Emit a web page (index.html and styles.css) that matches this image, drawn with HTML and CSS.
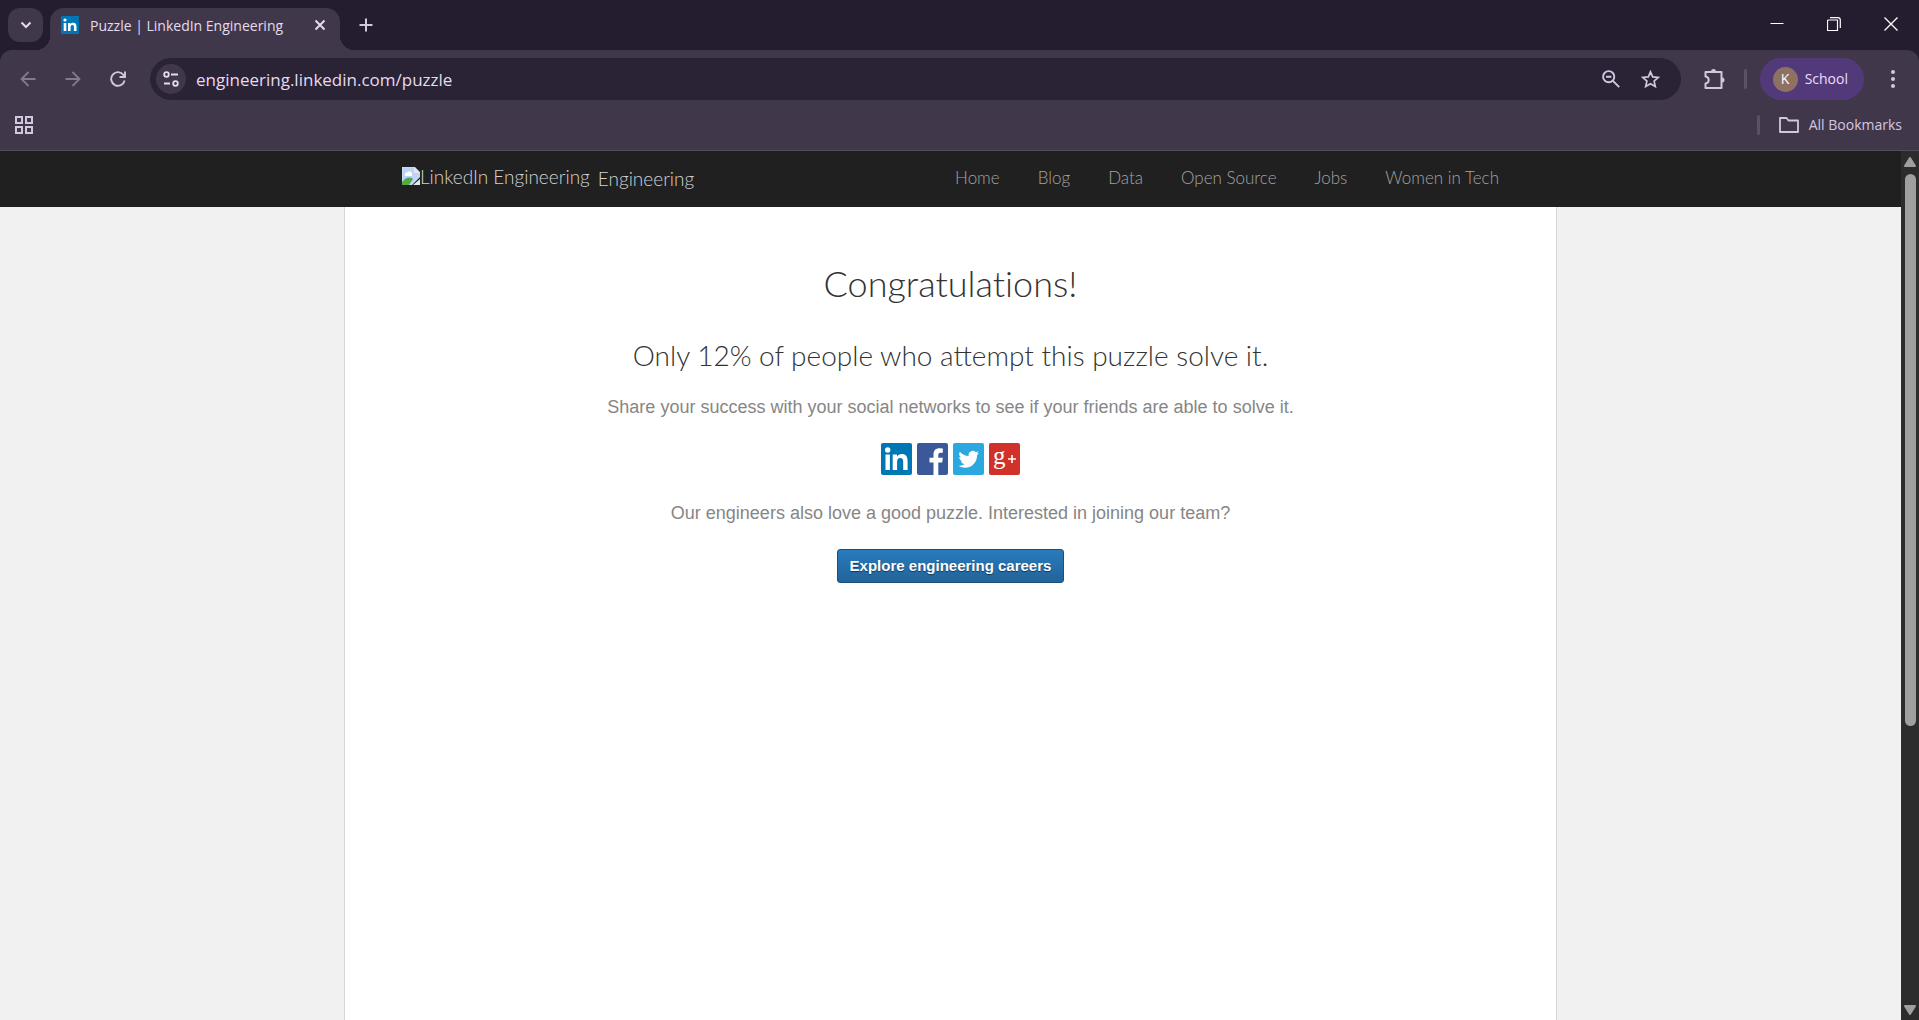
FILE: index.html
```html
<!DOCTYPE html>
<html lang="en">
<head>
<meta charset="utf-8">
<title>Puzzle | LinkedIn Engineering</title>
<link rel="stylesheet" href="styles.css">
</head>
<body>
<div class="browser">
  <div class="titlebar">
    <button class="tab-search" aria-label="Search tabs"><svg width="12" height="8" viewBox="0 0 12 8"><path d="M1.500 1.500 6 6l4.500-4.500" fill="none" stroke="currentColor" stroke-width="2"/></svg></button>
    <div class="tab">
      <svg width="18" height="18" viewBox="0 0 18 18"><rect width="18" height="18" rx="1" fill="#0077b5"/><circle cx="4" cy="4" r="1.600" fill="#fff"/><path d="M2.700 7h2.600v8H2.700zM7 7h2.500v1.200C10.200 7.200 11 6.800 12.200 6.800c2.400 0 3.300 1.500 3.300 3.900V15h-2.600v-4c0-1.200-.3-2-1.500-2s-1.800.8-1.800 2v4H7z" fill="#fff"/></svg>
      <span class="tab-title">Puzzle | LinkedIn Engineering</span>
      <button class="icon-button" aria-label="Close tab"><svg width="12" height="12" viewBox="0 0 12 12"><path d="m1.500 1.500 9 9m0-9-9 9" stroke="currentColor" stroke-width="2"/></svg></button>
    </div>
    <button class="icon-button new-tab" aria-label="New tab"><svg width="14" height="14" viewBox="0 0 14 14"><path d="M7 .5v13M.5 7h13" stroke="currentColor" stroke-width="2"/></svg></button>
    <div class="window-controls">
      <button class="icon-button" aria-label="Minimize"><svg width="14" height="14" viewBox="0 0 14 14"><path d="M.5 6.500h13" stroke="#fff"/></svg></button>
      <button class="icon-button" aria-label="Restore"><svg width="14" height="14" viewBox="0 0 14 14"><path d="M1.500 3h9v10.500h-10V3.500zM3 .7h8q2.300 0 2.300 2.300v8" fill="none" stroke="#fff" stroke-width="1.200"/></svg></button>
      <button class="icon-button" aria-label="Close"><svg width="14" height="14" viewBox="0 0 14 14"><path d="m.5.5 13 13m0-13-13 13" stroke="#fff" stroke-width="1.300"/></svg></button>
    </div>
  </div>
  <div class="toolbar">
    <button class="icon-button dim" aria-label="Back"><svg width="16" height="16" viewBox="0 0 16 16"><path d="M15.500 8H2M8.500 1 1.500 8l7 7" fill="none" stroke="currentColor" stroke-width="1.800"/></svg></button>
    <button class="icon-button dim" aria-label="Forward"><svg width="16" height="16" viewBox="0 0 16 16"><path d="M.5 8H14M7.500 1l7 7-7 7" fill="none" stroke="currentColor" stroke-width="1.800"/></svg></button>
    <button class="icon-button" aria-label="Reload"><svg width="16" height="16" viewBox="0 0 16 16"><path d="M14.600 9.500A6.800 6.800 0 1 1 13.500 4L14.700 6M15 .5V6H9.500" fill="none" stroke="currentColor" stroke-width="1.900"/></svg></button>
    <div class="address">
      <button class="site-info" aria-label="Site information"><svg width="16" height="16" viewBox="0 0 16 16"><g fill="none" stroke="currentColor" stroke-width="1.800"><circle cx="3.500" cy="3.500" r="2.300"/><path d="M8 3.500h7M1 12.500h6"/><circle cx="12.500" cy="12.500" r="2.300"/></g></svg></button>
      <input class="url" type="text" aria-label="Address" value="engineering.linkedin.com/puzzle">
      <button class="icon-button" aria-label="Zoom"><svg width="18" height="18" viewBox="0 0 18 18"><g fill="none" stroke="currentColor" stroke-width="1.900"><circle cx="6.700" cy="6.700" r="5.600"/><path d="m10.700 10.700 6.500 6.500M4 6.700h5.400"/></g></svg></button>
      <button class="icon-button" aria-label="Bookmark this tab"><svg width="19" height="18" viewBox="0 0 19 18"><path d="m9.500 1.800 2.200 5.100 5.600.5-4.200 3.700 1.200 5.400-4.800-2.800-4.800 2.800 1.200-5.400-4.200-3.700 5.600-.5z" fill="none" stroke="currentColor" stroke-width="1.700"/></svg></button>
    </div>
    <button class="icon-button extensions" aria-label="Extensions"><svg width="21" height="21" viewBox="0 0 21 21"><path d="M1.500 3h16v16h-16v-4.500q3.200-.5 3.200-3.500T1.500 7.500z" fill="none" stroke="currentColor" stroke-width="2" stroke-linejoin="round"/><path d="M7 2.500a2.500 2.500 0 0 1 5 0zM18 8.500a2.500 2.500 0 0 1 0 5z" fill="currentColor"/></svg></button>
    <span class="divider"></span>
    <button class="profile"><span class="avatar">K</span>School</button>
    <button class="icon-button menu" aria-label="Menu"><svg width="4" height="18" viewBox="0 0 4 18"><g fill="currentColor"><circle cx="2" cy="2" r="2"/><circle cx="2" cy="9" r="2"/><circle cx="2" cy="16" r="2"/></g></svg></button>
  </div>
  <div class="bookmarks">
    <button class="icon-button apps" aria-label="Apps"><svg width="18" height="18" viewBox="0 0 18 18"><path d="M1 1h6v6H1zM11 1h6v6h-6zM1 11h6v6H1zM11 11h6v6h-6z" fill="none" stroke="currentColor" stroke-width="2"/></svg></button>
    <span class="divider"></span>
    <button class="all-bookmarks"><svg width="20" height="16" viewBox="0 0 20 16"><path d="M1 1h6.500l2 2.500H19V15H1z" fill="none" stroke="currentColor" stroke-width="1.800" stroke-linejoin="round"/></svg>All Bookmarks</button>
  </div>
  <div class="viewport">
    <div class="site">
      <header class="site-header">
        <div class="header-inner">
          <a class="brand" href="#"><span class="brand-image"><svg width="18" height="18" viewBox="0 0 18 18"><path d="M0 0h13l5 5v5L10 18H0z" fill="#c8d9f3"/><path d="M1 1h11v5h5v3l-8 8H1z" fill="#bcd4fb"/><path d="M3 8q0-3 3-3 3-2 4 2v2H3z" fill="#fff"/><path d="M0 18v-3q6-7 11-3l-4 6z" fill="#55a846"/><path d="M12 0v6h6zM18 12v6h-7z" fill="#e3e6ea"/></svg>LinkedIn Engineering</span><span class="brand-name">Engineering</span></a>
          <nav class="nav">
            <a href="#">Home</a><a href="#">Blog</a><a href="#">Data</a><a href="#">Open Source</a><a href="#">Jobs</a><a href="#">Women in Tech</a>
          </nav>
        </div>
      </header>
      <main class="content">
        <h1>Congratulations!</h1>
        <h2>Only 12% of people who attempt this puzzle solve it.</h2>
        <p>Share your success with your social networks to see if your friends are able to solve it.</p>
        <div class="social">
          <a href="#" aria-label="LinkedIn"><svg viewBox="0 0 31 32"><rect width="31" height="32" rx="2" fill="#0077b5"/><circle cx="6.700" cy="7" r="2.700" fill="#fff"/><path d="M4.500 11.500h4.400V27H4.500zM11.700 11.500H16v2.200c1-1.700 2.600-2.600 4.600-2.600 4.300 0 6 2.500 6 7V27h-4.400v-8c0-2.500-.8-4-2.900-4-2.200 0-3.200 1.600-3.200 4v8h-4.400z" fill="#fff"/></svg></a>
          <a href="#" aria-label="Facebook"><svg viewBox="0 0 31 32"><rect width="31" height="32" rx="2" fill="#3b5998"/><path d="M16.500 32V19.500h-4v-4.700h4v-3.500c0-4 2.400-6 6-6q2 0 3.300.2v4.200h-2.300c-1.900 0-2.200 1-2.200 2.300v2.800h4.500l-.6 4.700h-3.900V32z" fill="#fff"/></svg></a>
          <a href="#" aria-label="Twitter"><svg viewBox="0 0 31 32"><rect width="31" height="32" rx="2" fill="#2ca8e0"/><path transform="translate(5.500 6) scale(.86)" d="M23.950 4.570a10 10 0 0 1-2.820.77 4.960 4.960 0 0 0 2.160-2.720c-.95.550-2 .950-3.130 1.180a4.920 4.920 0 0 0-8.380 4.480C7.690 8.100 4.070 6.130 1.640 3.160a4.920 4.920 0 0 0 1.520 6.570 4.900 4.900 0 0 1-2.230-.61v.06a4.920 4.920 0 0 0 3.950 4.830 5 5 0 0 1-2.210.08 4.940 4.940 0 0 0 4.600 3.420A9.870 9.870 0 0 1 0 19.540a14 14 0 0 0 7.550 2.210c9.050 0 14-7.500 14-13.980 0-.21 0-.42-.02-.63a9.940 9.940 0 0 0 2.420-2.570z" fill="#fff"/></svg></a>
          <a href="#" aria-label="Google Plus"><svg viewBox="0 0 31 32"><rect width="31" height="32" rx="2" fill="#d13128"/><text class="gplus" x="4" y="21">g</text><path d="M19 16h8m-4-4v8" stroke="#fff" stroke-width="1.600"/></svg></a>
        </div>
        <p>Our engineers also love a good puzzle. Interested in joining our team?</p>
        <button class="cta">Explore engineering careers</button>
      </main>
    </div>
    <div class="scrollbar">
      <svg width="12" height="10" viewBox="0 0 12 10"><path d="M6 1 11 9H1z" fill="#9f9f9f" stroke="#9f9f9f" stroke-width="2" stroke-linejoin="round"/></svg>
      <span class="rail"><span class="thumb"></span></span>
      <svg width="12" height="10" viewBox="0 0 12 10"><path d="M6 9 1 1h10z" fill="#9f9f9f" stroke="#9f9f9f" stroke-width="2" stroke-linejoin="round"/></svg>
    </div>
  </div>
</div>
</body>
</html>
```
FILE: styles.css
```css
* { box-sizing: border-box; }
body { margin: 0; }
button, input { font: inherit; color: inherit; background: none; border: 0; padding: 0; margin: 0; }
svg { display: block; flex: none; }
a { text-decoration: none; color: inherit; }

.browser {
  height: 100vh;
  display: flex;
  flex-direction: column;
  background: #241c2f;
  color: #e4dbee;
  font: 14px/20px "Open Sans", "Noto Sans", sans-serif;
}
.icon-button { display: grid; place-items: center; width: 32px; height: 32px; flex: none; color: #d3c7e0; }

/* Tab strip */
.titlebar { display: flex; height: 50px; flex: none; padding-left: 8px; }
.tab-search {
  display: grid; place-items: center;
  width: 35px; height: 34px; margin: 8px 7px 0 0;
  border-radius: 12px; background: #40374b;
}
.tab {
  position: relative;
  display: flex; align-items: center; gap: 11px;
  width: 290px; height: 42px; margin-top: 8px; padding: 0 4px 8px 11px;
  border-radius: 14px 14px 0 0; background: #40374b;
}
.tab::before, .tab::after { content: ""; position: absolute; bottom: 0; width: 14px; height: 14px; }
.tab::before { right: 100%; background: radial-gradient(circle at 0 0, transparent 14px, #40374b 14px); }
.tab::after { left: 100%; background: radial-gradient(circle at 100% 0, transparent 14px, #40374b 14px); }
.tab-title { flex: 1; padding-top: 2px; white-space: nowrap; }
.tab .icon-button { color: #e4dbee; }
.new-tab { margin: 9px 0 0 10px; }
.window-controls { display: flex; gap: 25px; margin: 8px 12px 0 auto; }

/* Toolbar */
.toolbar {
  display: flex; align-items: center; flex: none;
  height: 58px; padding: 0 12px; gap: 13px;
  border-radius: 12px 12px 0 0; background: #40374b;
}
.dim { color: #84798f; }
.address {
  flex: 1; display: flex; align-items: center; gap: 8px;
  height: 42px; margin-left: 3px; padding: 0 14px 0 6px; border-radius: 21px;
  background: #2a2235;
}
.site-info { display: grid; place-items: center; width: 30px; height: 30px; border-radius: 50%; background: #40374b; }
.url { flex: 1; min-width: 0; height: 30px; padding-left: 2px; font-size: 17px; outline: 0; }
.extensions { margin-left: 5px; }
.divider { width: 3px; height: 20px; border-radius: 2px; background: #5b5167; }
.profile {
  display: flex; align-items: center; gap: 7px;
  height: 42px; padding: 0 16px 0 13px; border-radius: 21px;
  background: #523a7a; color: #ecdcff;
}
.avatar { display: grid; place-items: center; width: 25px; height: 25px; border-radius: 50%; background: #8f7163; color: #fff; }
.menu { margin-right: -2px; }

/* Bookmarks bar */
.bookmarks {
  display: flex; align-items: center; flex: none; gap: 19px;
  height: 43px; padding: 0 17px 8px 8px;
  border-bottom: 1px solid #534c59; background: #40374b;
}
.apps { margin-right: auto; }
.all-bookmarks { display: flex; align-items: center; gap: 10px; color: #d3c7e0; }

/* Page */
.viewport { flex: 1; min-height: 0; display: flex; }
.site { flex: 1; min-width: 0; display: flex; flex-direction: column; background: #f1f1f1; }
.site-header { background: #202020; font-family: Lato, sans-serif; font-weight: 300; }
.header-inner {
  display: flex; justify-content: space-between; align-items: center;
  max-width: 1213px; height: 56px; margin: 0 auto; padding: 0 58px 2px;
}
.brand { display: flex; gap: 8px; font-size: 19px; color: #d2d2d2; }
.brand-image { display: flex; padding-bottom: 3px; }
.brand-name { padding-top: 2px; }
.nav { display: flex; gap: 38px; font-size: 17px; color: #a3a3a3; }
.content {
  flex: 1; width: 100%; max-width: 1213px; margin: 0 auto; padding-top: 54px;
  display: flex; flex-direction: column; align-items: center;
  border: solid #d6d6d6; border-width: 0 1px;
  background: #fff; color: #868686; text-align: center;
  font: 18px/24px "Liberation Sans", Arial, sans-serif;
}
h1, h2 { margin: 0; font-family: Lato, sans-serif; font-weight: 300; color: #333; }
h1 { font-size: 36px; line-height: 44px; font-variant-ligatures: none; }
h2 { margin-top: 32px; font-size: 28px; line-height: 36px; }
p { margin: 22px 0 24px; }
.social { display: flex; gap: 5px; margin-bottom: 4px; }
.social svg { width: 31px; height: 32px; }
.gplus { font: 25px "Liberation Serif", serif; fill: #fff; }
.cta {
  height: 34px; padding: 0 12px;
  border: 1px solid #1b4f7c; border-radius: 3px;
  background: linear-gradient(#287bbc, #23639a);
  color: #fff; font-size: 15px; font-weight: bold; line-height: 20px;
  text-shadow: 0 1px 1px #12395c;
}

.scrollbar {
  display: flex; flex-direction: column; align-items: center; gap: 7px;
  width: 18px; padding: 6px 0 5px; background: #2c2c2c;
}
.rail { flex: 1; width: 11px; }
.thumb { display: block; height: 67%; border-radius: 6px; background: #9f9f9f; }
```
